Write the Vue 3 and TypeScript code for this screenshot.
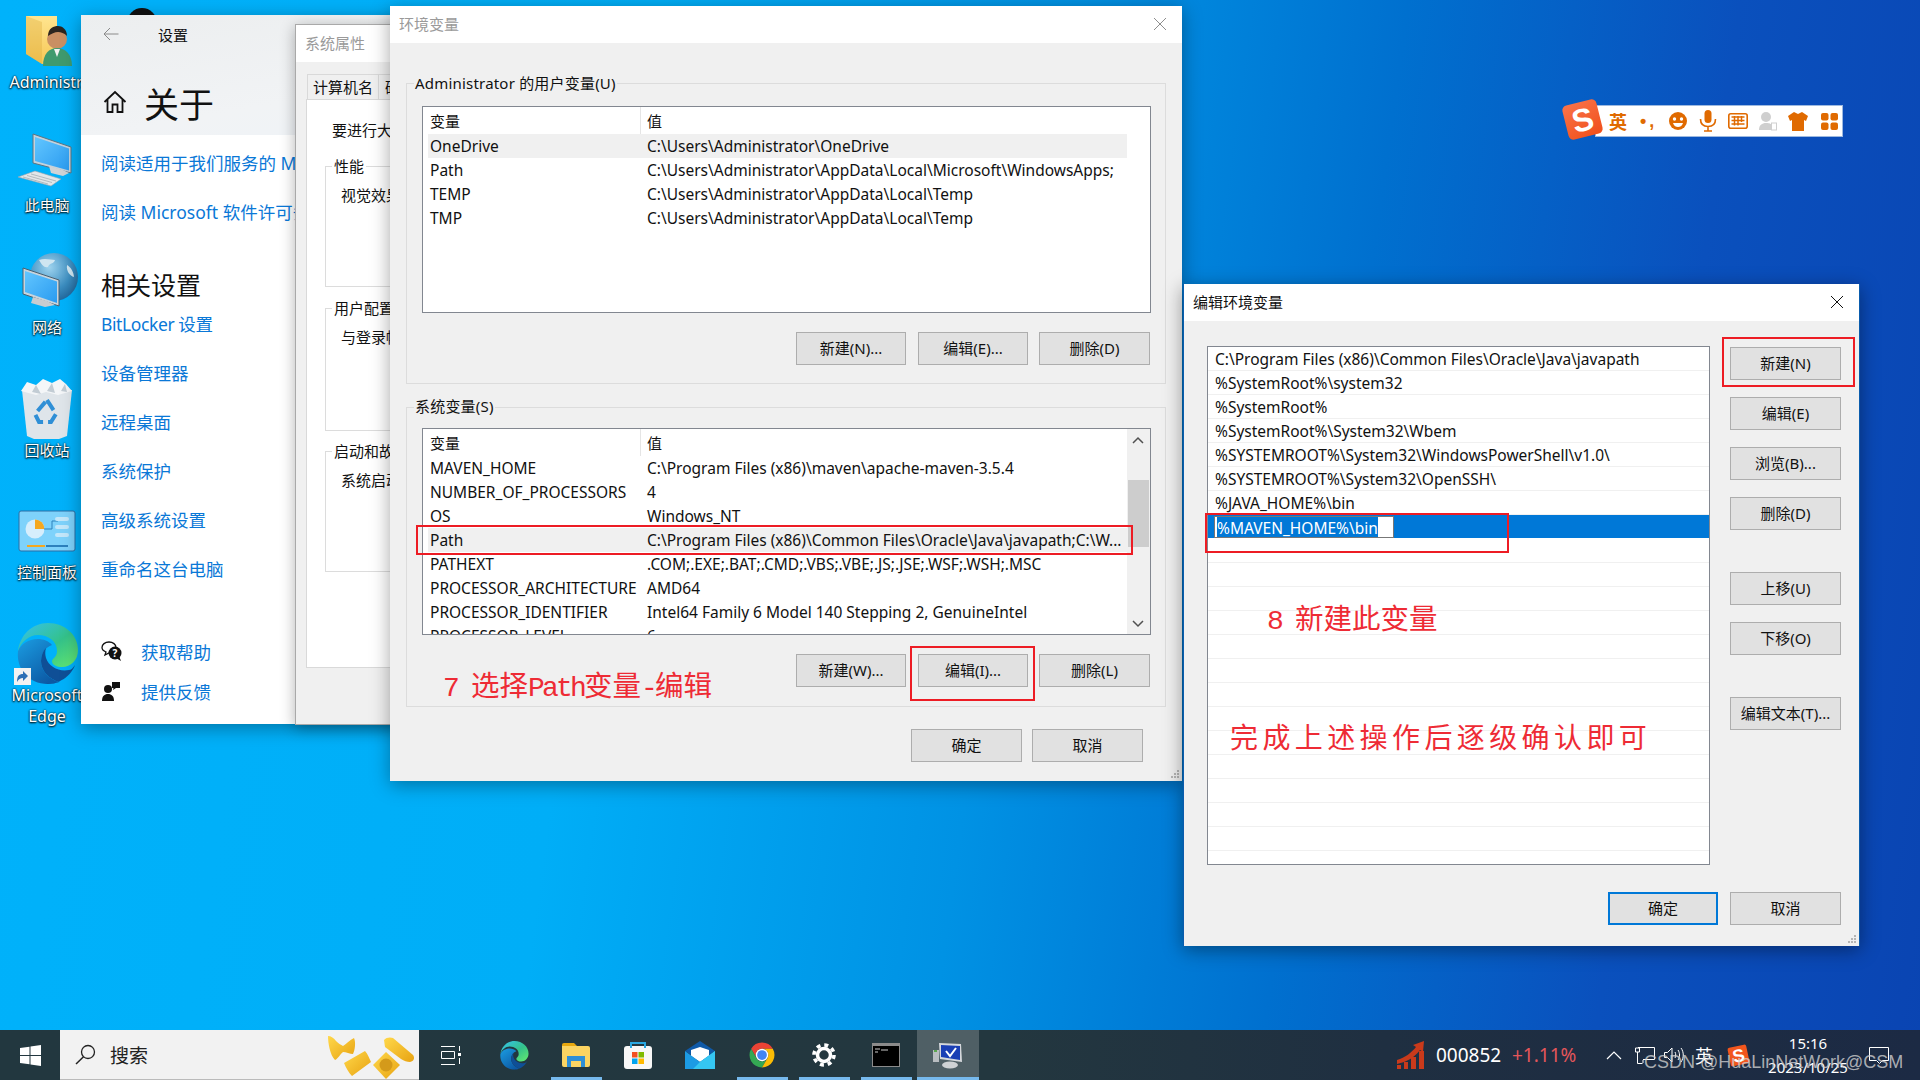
<script setup lang="ts">
interface EnvVar { name: string; value: string; selected?: boolean }

const userVars: EnvVar[] = [
  { name: 'OneDrive', value: 'C:\\Users\\Administrator\\OneDrive', selected: true },
  { name: 'Path', value: 'C:\\Users\\Administrator\\AppData\\Local\\Microsoft\\WindowsApps;' },
  { name: 'TEMP', value: 'C:\\Users\\Administrator\\AppData\\Local\\Temp' },
  { name: 'TMP', value: 'C:\\Users\\Administrator\\AppData\\Local\\Temp' },
]
const sysVars: EnvVar[] = [
  { name: 'MAVEN_HOME', value: 'C:\\Program Files (x86)\\maven\\apache-maven-3.5.4' },
  { name: 'NUMBER_OF_PROCESSORS', value: '4' },
  { name: 'OS', value: 'Windows_NT' },
  { name: 'Path', value: 'C:\\Program Files (x86)\\Common Files\\Oracle\\Java\\javapath;C:\\W...', selected: true },
  { name: 'PATHEXT', value: '.COM;.EXE;.BAT;.CMD;.VBS;.VBE;.JS;.JSE;.WSF;.WSH;.MSC' },
  { name: 'PROCESSOR_ARCHITECTURE', value: 'AMD64' },
  { name: 'PROCESSOR_IDENTIFIER', value: 'Intel64 Family 6 Model 140 Stepping 2, GenuineIntel' },
  { name: 'PROCESSOR_LEVEL', value: '6' },
]
const paths: string[] = [
  'C:\\Program Files (x86)\\Common Files\\Oracle\\Java\\javapath',
  '%SystemRoot%\\system32',
  '%SystemRoot%',
  '%SystemRoot%\\System32\\Wbem',
  '%SYSTEMROOT%\\System32\\WindowsPowerShell\\v1.0\\',
  '%SYSTEMROOT%\\System32\\OpenSSH\\',
  '%JAVA_HOME%\\bin',
]
const emptyRows: number[] = Array.from({ length: 14 }, (_, i) => i)
const groups = [
  { key: 'user', title: 'Administrator 的用户变量(U)', vars: userVars, scroll: false, btns: ['新建(N)...', '编辑(E)...', '删除(D)'] },
  { key: 'sys', title: '系统变量(S)', vars: sysVars, scroll: true, btns: ['新建(W)...', '编辑(I)...', '删除(L)'] },
]
const links1 = ['设备管理器', '远程桌面', '系统保护', '高级系统设置', '重命名这台电脑']
</script>

<template>
  <div class="desktop">
    <!-- shared gradients and shapes -->
    <svg class="defs" width="0" height="0" aria-hidden="true">
      <defs>
        <linearGradient id="edgeA" x1="0" y1="0" x2="1" y2="1"><stop offset="0" stop-color="#35c1f1" /><stop offset=".55" stop-color="#34c28a" /><stop offset="1" stop-color="#66eb6e" /></linearGradient>
        <linearGradient id="edgeB" x1="0" y1="0" x2=".7" y2="1"><stop offset="0" stop-color="#1b9de2" /><stop offset="1" stop-color="#0c59a4" /></linearGradient>
        <linearGradient id="scr" x1="0" y1="0" x2="1" y2="1"><stop offset="0" stop-color="#62c6ff" /><stop offset="1" stop-color="#2a9bf0" /></linearGradient>
        <linearGradient id="fold" x1="0" y1="0" x2="0" y2="1"><stop offset="0" stop-color="#ffe58f" /><stop offset="1" stop-color="#f6c756" /></linearGradient>
        <linearGradient id="pasta" x1="0" y1="0" x2="1" y2="1"><stop offset="0" stop-color="#ffd84a" /><stop offset="1" stop-color="#e8a312" /></linearGradient>
        <radialGradient id="globe" cx=".4" cy=".3" r=".8"><stop offset="0" stop-color="#9ed3ee" /><stop offset=".6" stop-color="#3b8dc0" /><stop offset="1" stop-color="#1c5e93" /></radialGradient>
        <symbol id="edge" viewBox="0 0 64 64">
          <path fill="url(#edgeB)" d="M3 30C1 47 13 63 33 63c4 0 8-1 11-2-10-3-18-11-18-21 0-8 5-14 11-16-3-4-9-6-14-6C13 18 6 23 3 30z" />
          <path fill="#0f4f96" d="M60 44c-3 9-14 19-27 19-1 0-2 0-3 0 4 0 9-1 14-2-10-3-18-11-18-21 0-5 2-10 5-13-1 3-1 7 0 10 3 9 13 14 23 12 2 0 4-2 6-5z" />
          <path fill="url(#edgeA)" d="M3 30C5 14 17 2 33 2c17 0 30 12 30 27 0 10-7 17-16 17-5 0-10-2-10-6 0-1 1-2 2-3 2-2 3-4 3-7 0-10-9-16-19-16C14 14 6 21 3 30z" />
        </symbol>
      </defs>
    </svg>

    <!-- desktop icons -->
    <div class="desk-icons">
      <div class="desk-item">
        <svg class="desk-svg" viewBox="0 0 64 64"><path fill="url(#fold)" d="M11 8h31v48H27l-16-10z" /><path fill="#d9a83a" d="M11 8l16 6v42l-16-10z" opacity=".35" /><circle cx="42" cy="31" r="10" fill="#c98f63" /><path fill="#2c2620" d="M33 28c0-8 6-10 10-10s9 3 9 10c-3-3-6-4-9-4s-7 2-10 4z" /><path fill="#3f9a6e" d="M28 58c0-12 6-18 14-18s15 6 15 18z" /><path fill="#f1f1f1" d="M39 41l3 8 3-8z" /></svg>
        <span class="desk-label latin">Administr.</span>
      </div>
      <div class="desk-item">
        <svg class="desk-svg" viewBox="0 0 64 64"><path fill="#c4d2dc" stroke="#5d7482" d="M18 3l38 13v26L18 32z" /><path fill="url(#scr)" d="M20 6l34 11.500v22L20 30z" /><path fill="#cfd3d6" d="M34 35l14 4 6 3-6 3-12-3z" /><path fill="#e2e6e8" stroke="#9ba5ab" stroke-width=".6" d="M3 46l17-6 26 8-10 7z" /><path stroke="#a6aeb4" stroke-width=".8" d="M8 46l25 7M12 44.500l25 7M16 43l25 7" /></svg>
        <span class="desk-label">此电脑</span>
      </div>
      <div class="desk-item">
        <svg class="desk-svg" viewBox="0 0 64 64"><circle cx="39" cy="24" r="24" fill="url(#globe)" /><path fill="#cfe6f1" d="M24 7c6-2 12 0 16 0-1 4-6 3-7 7-4 1-6-2-9-7zM52 12c4 2 7 8 7 12-4-1-8-6-7-12z" /><path fill="#c8d4dc" stroke="#4a6070" d="M8 15l36 12v26L8 41z" /><path fill="url(#scr)" d="M10 18l32 10.500v21.500L10 39z" /><path fill="#c8ccd0" d="M18 44l14 4 8 4-10 2-14-4z" /></svg>
        <span class="desk-label">网络</span>
      </div>
      <div class="desk-item">
        <svg class="desk-svg" viewBox="0 0 64 64"><path fill="#dfe5ea" d="M7 14h50l-5 46-8 3H19l-7-3z" /><path fill="#f4f6f8" d="M6 15l6-9 9 3 7-6 9 4 8-4 6 5 6 7-14 4-12-3-10 3z" /><path fill="#c2ccd4" d="M21 9l5 9-9-2zM37 7l3 10-8-2zM50 8l2 8-6-1z" /><path fill="none" stroke="#2f8fd6" stroke-width="4" stroke-dasharray="12 5" d="M32 24l9 14-5 8H24l-4-8z" /></svg>
        <span class="desk-label">回收站</span>
      </div>
      <div class="desk-item">
        <svg class="desk-svg" viewBox="0 0 64 64"><rect x="4" y="13" width="56" height="40" rx="2" fill="#7ed2fb" stroke="#2c6fa5" /><circle cx="20" cy="31" r="9.500" fill="#d6eefc" /><path fill="#f5a81f" d="M20 21.500a9.500 9.500 0 0 1 9.500 9.500H20z" /><path stroke="#2d81bd" fill="none" d="M29 31h8v-8h6" /><rect x="40" y="19" width="14" height="4" rx="2" fill="#c3e7fa" /><rect x="40" y="27" width="14" height="4" rx="2" fill="#c3e7fa" /><rect x="40" y="35" width="14" height="4" rx="2" fill="#c3e7fa" /><rect x="12" y="47" width="18" height="2" fill="#f5a81f" /><rect x="31" y="47" width="22" height="2" fill="#2d81bd" /></svg>
        <span class="desk-label">控制面板</span>
      </div>
      <div class="desk-item">
        <div class="edge-wrap">
          <svg class="desk-svg" viewBox="0 0 64 64"><use href="#edge" width="64" height="64" /></svg>
          <span class="shortcut"><svg viewBox="0 0 16 16" width="16" height="16"><path fill="#2c6fb5" d="M3 14c0-6 2-8 6-8V3l5 5-5 5v-3c-3 0-4 1-6 4z" /></svg></span>
        </div>
        <span class="desk-label latin wrap">Microsoft Edge</span>
      </div>
    </div>

    <div class="avatar-top"></div>

    <!-- settings window -->
    <section class="win settings">
      <header class="set-head">
        <div class="set-nav">
          <svg width="16" height="14" viewBox="0 0 16 14"><path d="M15.500 7H1M7 1L1 7l6 6" fill="none" stroke="#8a8a8a" stroke-width="1" /></svg>
          <span class="set-nav-title">设置</span>
        </div>
        <div class="set-title">
          <svg width="24" height="24" viewBox="0 0 24 24"><path d="M1.500 12L12 2l10.500 10M4.500 9.500V22H9.500V14.500H14.500V22H19.500V9.500" fill="none" stroke="#111" stroke-width="1.800" /></svg>
          <span>关于</span>
        </div>
      </header>
      <div class="set-body">
        <a class="link first">阅读适用于我们服务的 Microsoft 服务协议</a>
        <a class="link">阅读 Microsoft 软件许可条款</a>
        <h2 class="set-h2">相关设置</h2>
        <a class="link bit">BitLocker 设置</a>
        <a v-for="l in links1" :key="l" class="link">{{ l }}</a>
        <div class="help first-help">
          <svg width="21" height="21" viewBox="0 0 21 21"><path fill="#fff" stroke="#111" stroke-width="1.300" d="M8 1c4 0 7 2.500 7 5.500S12 12 8 12l-4 2 1-3C2.500 10 1 8.500 1 6.500 1 3.500 4 1 8 1z" /><circle cx="14" cy="12" r="6.500" fill="#111" /><path fill="#111" d="M15 17l5 3-2-5z" /><text x="14" y="15.500" class="help-q">?</text></svg>
          <a class="help-link">获取帮助</a>
        </div>
        <div class="help">
          <svg width="21" height="21" viewBox="0 0 21 21"><circle cx="7" cy="8" r="4" fill="#111" /><path fill="#111" d="M1 20c0-5 2.500-7 6-7s6 2 6 7z" /><path fill="#111" d="M11 1h8v6h-4l-3 2 .5-2H11z" /></svg>
          <a class="help-link">提供反馈</a>
        </div>
      </div>
    </section>

    <!-- system properties window -->
    <section class="win sysprop">
      <div class="sp-title">系统属性</div>
      <div class="sp-tabs"><span class="sp-tab">计算机名</span><span class="sp-tab next">硬件</span></div>
      <div class="sp-panel">
        <p class="sp-note">要进行大多数更改，你必须作为管理员登录。</p>
        <div class="sp-group g1"><span class="sp-legend">性能</span><p>视觉效果，处理器计划，内存使用，以及虚拟内存</p></div>
        <div class="sp-group g2"><span class="sp-legend">用户配置文件</span><p>与登录帐户相关的桌面设置</p></div>
        <div class="sp-group g3"><span class="sp-legend">启动和故障恢复</span><p>系统启动、系统故障和调试信息</p></div>
      </div>
    </section>

    <!-- environment variables window -->
    <section class="win env">
      <header class="titlebar inactive">
        <span>环境变量</span>
        <svg width="14" height="14" viewBox="0 0 14 14"><path d="M1 1l12 12M13 1L1 13" stroke="#8d8d8d" fill="none" /></svg>
      </header>
      <div class="env-body">
        <div v-for="g in groups" :key="g.key" class="groupbox" :class="g.key">
          <span class="legend">{{ g.title }}</span>
          <div class="listview">
            <div class="lv-main">
              <div class="lv-head"><span class="lv-h1">变量</span><span class="lv-h2">值</span></div>
              <div v-for="v in g.vars" :key="v.name" class="lv-row" :class="{ sel: v.selected }">
                <span class="lv-name">{{ v.name }}</span><span class="lv-val">{{ v.value }}</span>
              </div>
            </div>
            <div class="lv-side" :class="{ scroll: g.scroll }">
              <template v-if="g.scroll">
                <svg class="arrow" width="22" height="17" viewBox="0 0 22 17"><path d="M6 11l5-5 5 5" fill="none" stroke="#505050" stroke-width="1.500" /></svg>
                <div class="thumb"></div>
                <svg class="arrow bottom" width="22" height="17" viewBox="0 0 22 17"><path d="M6 6l5 5 5-5" fill="none" stroke="#505050" stroke-width="1.500" /></svg>
              </template>
            </div>
          </div>
          <div class="btn-row">
            <button v-for="b in g.btns" :key="b" class="btn">{{ b }}</button>
          </div>
        </div>
        <div class="foot env-foot">
          <button class="btn">确定</button>
          <button class="btn">取消</button>
        </div>
      </div>
      <svg class="grip" width="10" height="10" viewBox="0 0 10 10"><path fill="#b5b5b5" d="M7 1h2v2H7zM4 4h2v2H4zM7 4h2v2H7zM1 7h2v2H1zM4 7h2v2H4zM7 7h2v2H7z" /></svg>
      <div class="mark m-path"></div>
      <div class="mark m-edit"></div>
      <div class="note n7"><span class="mono">7&nbsp;</span>选择<span class="mono">Path</span>变量<span class="mono">-</span>编辑</div>
    </section>

    <!-- edit window -->
    <section class="win edit">
      <header class="titlebar">
        <span>编辑环境变量</span>
        <svg width="14" height="14" viewBox="0 0 14 14"><path d="M1 1l12 12M13 1L1 13" stroke="#111" fill="none" /></svg>
      </header>
      <div class="edit-body">
        <div class="edit-main">
          <div class="pathlist">
            <div v-for="p in paths" :key="p" class="p-row">{{ p }}</div>
            <div class="p-row sel"><div class="p-input"><span class="p-sel">%MAVEN_HOME%\bin</span></div></div>
            <div v-for="n in emptyRows" :key="n" class="p-row"></div>
          </div>
          <div class="side-btns">
            <button class="btn wide">新建(N)</button>
            <button class="btn wide">编辑(E)</button>
            <button class="btn wide">浏览(B)...</button>
            <button class="btn wide">删除(D)</button>
            <button class="btn wide sep">上移(U)</button>
            <button class="btn wide">下移(O)</button>
            <button class="btn wide sep">编辑文本(T)...</button>
          </div>
        </div>
        <div class="foot edit-foot">
          <button class="btn default">确定</button>
          <button class="btn wide">取消</button>
        </div>
      </div>
      <svg class="grip" width="10" height="10" viewBox="0 0 10 10"><path fill="#b5b5b5" d="M7 1h2v2H7zM4 4h2v2H4zM7 4h2v2H7zM1 7h2v2H1zM4 7h2v2H4zM7 7h2v2H7z" /></svg>
      <div class="mark m-new"></div>
      <div class="mark m-maven"></div>
      <div class="note n8"><span class="mono">8&nbsp;</span>新建此变量</div>
      <div class="note n-done">完成上述操作后逐级确认即可</div>
    </section>

    <!-- sogou bar -->
    <div class="sogou">
      <div class="sg-logo"><span>S</span></div>
      <span class="sg-en">英</span>
      <span class="sg-dot">•,</span>
      <svg width="20" height="20" viewBox="0 0 20 20"><circle cx="10" cy="10" r="9" fill="#e06a00" /><circle cx="6.500" cy="8" r="1.700" fill="#fff" /><circle cx="13.500" cy="8" r="1.700" fill="#fff" /><path d="M5 12h10c-1 3-3 4-5 4s-4-1-5-4z" fill="#fff" /></svg>
      <svg width="20" height="22" viewBox="0 0 20 22"><rect x="6.500" y="0" width="7" height="13" rx="3.500" fill="#e06a00" /><path d="M2.500 9c0 5 3 7.500 7.500 7.500s7.500-2.500 7.500-7.500M10 16.500V21M6 21h8" fill="none" stroke="#e06a00" stroke-width="1.600" /></svg>
      <svg width="20" height="16" viewBox="0 0 20 16"><rect x=".8" y=".8" width="18.400" height="14.400" rx="2" fill="#fff" stroke="#e06a00" stroke-width="1.600" /><path d="M3.500 4h13M3.500 7.500h13M3.500 11h13M6.500 3v9.500M10 3v9.500M13.500 3v6" stroke="#e06a00" stroke-width="1.500" fill="none" /></svg>
      <svg width="20" height="20" viewBox="0 0 20 20"><circle cx="8" cy="6" r="5" fill="#cfcfcf" /><path d="M1 19c0-5 3-7 7-7s5 1 6 2v5z" fill="#cfcfcf" /><rect x="13.500" y="12" width="5" height="7" fill="#fff" stroke="#cfcfcf" /></svg>
      <svg width="20" height="19" viewBox="0 0 20 19"><path fill="#e06a00" d="M6 0l4 2 4-2 6 4-2 5-2-1v11H4V8L2 9 0 4z" /></svg>
      <svg width="17" height="17" viewBox="0 0 17 17"><g fill="#e06a00"><rect width="7.500" height="7.500" rx="2" /><rect x="9.500" width="7.500" height="7.500" rx="2" /><rect y="9.500" width="7.500" height="7.500" rx="2" /><rect x="9.500" y="9.500" width="7.500" height="7.500" rx="2" /></g></svg>
    </div>

    <!-- taskbar -->
    <footer class="taskbar">
      <div class="start">
        <svg width="21" height="21" viewBox="0 0 21 21"><path fill="#fff" d="M0 3l9.500-1.300V10H0zM10.500 1.500L21 0v10h-10.500zM0 11h9.500v8.300L0 18zM10.500 11H21v10l-10.500-1.500z" /></svg>
      </div>
      <div class="search">
        <svg width="21" height="21" viewBox="0 0 21 21"><circle cx="13" cy="8" r="6.500" fill="none" stroke="#222" stroke-width="1.300" /><path d="M8.500 12.800L1 20" stroke="#222" stroke-width="1.500" /></svg>
        <span>搜索</span>
        <svg class="pasta" width="88" height="46" viewBox="0 0 88 46">
          <path fill="url(#pasta)" d="M1 3c3 0 6 2 8 5 2 2 5 4 7 5 3-2 7-6 11-8 2 4 1 12-1 16-3 0-7-2-10-2-3 2-5 7-8 8C3 22 1 10 1 3z" />
          <path fill="url(#pasta)" d="M17 30l21-12c3 3 4 7 6 11L25 43c-3-3-6-8-8-13z" />
          <path fill="url(#pasta)" d="M57 7c2-3 7-3 9-2l20 17c2 3 1 6-3 7-3 0-6-1-9-3L58 14z" />
          <path fill="url(#pasta)" d="M46 32l13-13 14 13-14 14z" />
          <circle cx="59" cy="32" r="6.500" fill="#d49a1a" />
        </svg>
      </div>
      <div class="tb-cell task">
        <svg width="20" height="19" viewBox="0 0 20 19"><path d="M0 .5h14M0 18.500h14M.5 5.500h13v7h-13zM18.500 0v5M18.500 12v6" stroke="#fff" fill="none" /><rect x="17" y="7" width="3" height="3" fill="#fff" /></svg>
      </div>
      <div class="tb-cell"><svg width="30" height="30" viewBox="0 0 64 64"><use href="#edge" width="64" height="64" /></svg></div>
      <div class="tb-cell on">
        <svg width="28" height="24" viewBox="0 0 28 24"><path fill="#e8a80f" d="M0 2a2 2 0 0 1 2-2h10l3 3H0z" /><path fill="#fbd462" d="M0 3h26a2 2 0 0 1 2 2v17a2 2 0 0 1-2 2H2a2 2 0 0 1-2-2z" /><path fill="#2f8fd6" d="M5 13h18v11h-4v-6H9v6H5z" /><rect x="9" y="18" width="10" height="6" fill="#fbd462" /></svg>
      </div>
      <div class="tb-cell">
        <svg width="30" height="30" viewBox="0 0 30 30"><rect x="1" y="6" width="28" height="23" rx="3" fill="#f7f7f7" /><path fill="none" stroke="#29a7e1" stroke-width="2" d="M8 8V3h14v5" /><rect x="9" y="12" width="5.500" height="5.500" fill="#f25022" /><rect x="15.500" y="12" width="5.500" height="5.500" fill="#7fba00" /><rect x="9" y="18.500" width="5.500" height="5.500" fill="#00a4ef" /><rect x="15.500" y="18.500" width="5.500" height="5.500" fill="#ffb900" /></svg>
      </div>
      <div class="tb-cell">
        <svg width="30" height="28" viewBox="0 0 30 28"><path fill="#0f5aa8" d="M0 10L15 0l15 10-15 10z" /><path fill="#fff" d="M6 9l9-3 9 3v6l-9 6-9-6z" /><path fill="#1c9be4" d="M0 10l15 11 15-11v18H0z" /><path fill="#35c6f2" d="M30 10L15 21 8 28h22z" /></svg>
      </div>
      <div class="tb-cell on">
        <svg width="30" height="30" viewBox="0 0 48 48"><path fill="#ea4335" d="M24 4A20 20 0 0 1 41.300 14H24a10 10 0 0 0-8.700 15L6.700 14A20 20 0 0 1 24 4z" /><path fill="#34a853" d="M6.700 14L15.300 29A10 10 0 0 0 32.700 29L24 44A20 20 0 0 1 6.700 14z" /><path fill="#fbbc05" d="M41.300 14H24a10 10 0 0 1 8.700 15L24 44a20 20 0 0 0 17.300-30z" /><circle cx="24" cy="24" r="10" fill="#fff" /><circle cx="24" cy="24" r="7.800" fill="#4285f4" /></svg>
      </div>
      <div class="tb-cell on">
        <svg width="24" height="24" viewBox="0 0 24 24"><circle cx="12" cy="12" r="6.500" fill="none" stroke="#fff" stroke-width="3.500" /><circle cx="12" cy="12" r="10" fill="none" stroke="#fff" stroke-width="3.600" stroke-dasharray="4 3.850" /></svg>
      </div>
      <div class="tb-cell on">
        <svg width="28" height="24" viewBox="0 0 28 24"><rect width="28" height="24" fill="#8b8b8b" /><rect x="1" y="3" width="26" height="20" fill="#000" /><path d="M3 6h5M3 9h3M9 7h7" stroke="#ccc" /></svg>
      </div>
      <div class="tb-cell on active">
        <svg width="30" height="28" viewBox="0 0 30 28"><path fill="#d5d8dc" d="M6 2l22 1 1 18-22-3z" /><path fill="#1a3fb5" d="M8 4l19 1v14L8 16z" /><path d="M13 10l4 5 6-8" stroke="#fff" stroke-width="2" fill="none" /><ellipse cx="17" cy="24" rx="8" ry="3.500" fill="#cfd2d5" /><rect x="0" y="9" width="6" height="12" fill="#b9bdc1" /><rect x="1" y="9" width="3" height="2" fill="#5aa64f" /></svg>
      </div>
      <div class="tray">
        <svg class="t-chart" width="28" height="28" viewBox="0 0 28 28"><g fill="#c93a1b"><rect x="0" y="24" width="4" height="4" /><rect x="7" y="21" width="4" height="7" /><rect x="14" y="16" width="5" height="12" /><rect x="22" y="10" width="5" height="18" /><path d="M0 19C8 17 15 11 19 6l-3-2 11-4-1 11-3-2c-5 7-13 12-23 14z" /></g></svg>
        <span class="t-code">000852</span>
        <span class="t-pct">+1.11%</span>
        <svg class="t-chev" width="16" height="9" viewBox="0 0 16 9"><path d="M1 8l7-7 7 7" fill="none" stroke="#fff" stroke-width="1.200" /></svg>
        <svg class="t-net" width="20" height="17" viewBox="0 0 20 17"><path d="M3 .5h16.500v12H8M.5 1h4v4h-4zM2.500 5v11.500M2.500 16.500h5M8 13v3" fill="none" stroke="#fff" /></svg>
        <svg class="t-spk" width="20" height="16" viewBox="0 0 20 16"><path d="M.5 5.500h3L8 1v14l-4.500-4.500h-3zM11 5c1 2 1 4 0 6M14 3c2 3 2 7 0 10M17 1c3 4 3 10 0 14" fill="none" stroke="#fff" /></svg>
        <span class="t-ime">英</span>
        <div class="t-sg"><span>S</span></div>
        <div class="t-clock"><span>15:16</span><span>2023/10/25</span></div>
        <svg class="t-notif" width="20" height="17" viewBox="0 0 20 17"><path d="M.5.5h19v13h-6l-3 3-3-3h-7z" fill="none" stroke="#fff" /></svg>
      </div>
    </footer>
    <div class="watermark">CSDN @HuaLinNetWork@CSM</div>
  </div>
</template>

<style>
html, body { margin: 0; padding: 0; overflow: hidden; }
</style>

<style scoped>
.desktop {
  position: relative;
  width: 1920px;
  height: 1080px;
  overflow: hidden;
  font-family: "Noto Sans", "Noto Sans CJK SC", sans-serif;
  font-size: 15px;
  color: #111;
  background: linear-gradient(98deg, #00b2fb 0%, #00aef7 32%, #0092e4 52%, #0070cf 68%, #0a50bd 84%, #0a44b2 100%);
}
.defs { position: absolute; }
p, h2 { margin: 0; font-weight: 400; }
a { color: #0a78d7; }

/* desktop icons */
.desk-icons { position: absolute; left: 0; top: 8px; width: 94px; display: flex; flex-direction: column; }
.desk-item { height: 122.6px; display: flex; flex-direction: column; align-items: center; }
.desk-svg { width: 64px; height: 64px; display: block; }
.desk-label { color: #fff; font-size: 15px; line-height: 20px; text-align: center; text-shadow: 0 1px 2px #000, 0 0 2px #000; white-space: nowrap; }
.desk-label.latin { font-size: 16px; }
.desk-label.wrap { white-space: normal; width: 80px; line-height: 21px; }
.edge-wrap { position: relative; }
.shortcut { position: absolute; left: -1px; bottom: 0; width: 17px; height: 17px; background: #f2f2f2; display: flex; }
.avatar-top { position: absolute; left: 127px; top: 8px; width: 30px; height: 30px; border-radius: 50%; background: #111; }

/* windows */
.win { position: absolute; box-sizing: border-box; }
.settings { left: 81px; top: 15px; width: 320px; height: 709px; background: #fff; box-shadow: 0 4px 18px rgba(0,0,0,.35); }
.set-head { height: 120px; box-sizing: border-box; background: linear-gradient(170deg, #eceeef, #f1f3f5 70%, #eff3f7); padding: 9px 0 0 22px; }
.set-nav { display: flex; align-items: center; height: 20px; }
.set-nav-title { margin-left: 39px; font-size: 15px; }
.set-title { display: flex; align-items: center; margin-top: 35px; height: 46px; font-size: 35px; }
.set-title span { margin-left: 17px; }
.set-body { display: flex; flex-direction: column; padding: 16px 0 0 20px; white-space: nowrap; }
.link { font-size: 17.5px; line-height: 24px; margin-bottom: 25px; }
.link.bit { margin-bottom: 25px; letter-spacing: -.4px; }
.set-h2 { font-size: 25px; line-height: 34px; margin-top: 18.5px; margin-bottom: 10.5px; }
.help { display: flex; align-items: center; height: 24px; margin-bottom: 16px; }
.first-help { margin-top: 33px; }
.help-link { color: #0a78d7; font-size: 17.5px; margin-left: 19px; }
.help-q { fill: #fff; font-size: 10px; font-weight: 700; text-anchor: middle; }

.sysprop { left: 295px; top: 24px; width: 110px; height: 701px; background: #f0f0f0; border: 1px solid #a9a9a9; box-shadow: 0 3px 14px rgba(0,0,0,.3); overflow: hidden; }
.sp-title { height: 37px; background: #fff; color: #9a9a9a; padding-left: 9px; line-height: 36px; white-space: nowrap; }
.sp-tabs { display: flex; margin: 12px 0 0 11px; height: 25px; white-space: nowrap; }
.sp-tab { width: 70px; border: 1px solid #d9d9d9; border-bottom: 0; text-align: center; line-height: 24px; background: #f0f0f0; flex: none; }
.sp-tab.next { margin-left: -1px; padding-left: 6px; text-align: left; }
.sp-panel { margin-left: 10px; width: 200px; height: 569px; background: #fff; border: 1px solid #d9d9d9; box-sizing: border-box; padding: 20px 0 0 25px; white-space: nowrap; }
.sp-note { line-height: 21px; }
.sp-group { position: relative; margin-left: -7px; border: 1px solid #dcdcdc; box-sizing: border-box; width: 220px; padding: 18px 0 0 15px; }
.sp-group p { line-height: 21px; }
.sp-legend { position: absolute; left: 6px; top: -11px; background: #fff; padding: 0 2px; line-height: 21px; }
.g1 { height: 121px; margin-top: 25px; }
.g2 { height: 123px; margin-top: 21px; }
.g3 { height: 121px; margin-top: 20px; }

.titlebar { height: 37px; box-sizing: border-box; background: #fff; display: flex; align-items: center; justify-content: space-between; padding: 0 15px 2px 9px; }
.titlebar.inactive { color: #9a9a9a; }

.env { left: 390px; top: 6px; width: 792px; height: 775px; background: #f0f0f0; box-shadow: 0 4px 18px rgba(0,0,0,.35); }
.env-body { padding: 40px 16px 0; display: flex; flex-direction: column; }
.groupbox { position: relative; box-sizing: border-box; height: 301px; border: 1px solid #dcdcdc; padding: 22px 14px 0 15px; }
.groupbox + .groupbox { margin-top: 23px; height: 300px; padding-top: 20px; }
.legend { position: absolute; left: 7px; top: -12px; background: #f0f0f0; line-height: 22px; padding: 0 1px; white-space: nowrap; letter-spacing: .2px; }
.groupbox + .groupbox .legend { top: -13px; }
.listview { height: 207px; box-sizing: border-box; border: 1px solid #828790; background: #fff; display: flex; overflow: hidden; }
.lv-main { flex: 1; padding-left: 5px; overflow: hidden; white-space: nowrap; }
.lv-side { width: 23px; flex: none; position: relative; }
.lv-head { height: 27px; display: flex; line-height: 28px; }
.lv-h1 { width: 210px; padding-left: 2px; box-sizing: content-box; }
.lv-h2 { border-left: 1px solid #e5e5e5; padding-left: 6px; flex: 1; }
.lv-row { height: 24px; line-height: 24px; display: flex; padding-left: 2px; font-size: 15.5px; }
.lv-row.sel { background: #f0f0f0; }
.lv-name { width: 217px; flex: none; white-space: nowrap; }
.lv-val { white-space: nowrap; }
.lv-side.scroll { background: #f0f0f0; display: flex; flex-direction: column; }
.arrow { display: block; flex: none; margin-top: 3px; }
.arrow.bottom { margin-top: auto; margin-bottom: 2px; }
.thumb { margin: 31px 1px 0; height: 67px; background: #cdcdcd; }

.btn-row { display: flex; justify-content: flex-end; gap: 11px; margin-top: 19px; padding-right: 1px; }
.btn { box-sizing: border-box; width: 110px; height: 33px; background: #e1e1e1; border: 1px solid #adadad; border-radius: 0; font: inherit; color: #111; padding: 0 0 2px; flex: none; }
.btn-row .btn:nth-child(2) { margin-left: 1px; }
.btn-row .btn:last-child { width: 111px; }
.foot { display: flex; justify-content: flex-end; gap: 10px; }
.env-foot { margin-top: 22px; padding-right: 23px; }
.env-foot .btn { width: 111px; }
.grip { position: absolute; right: 2px; bottom: 2px; }

.edit { left: 1183px; top: 284px; width: 677px; height: 662px; background: #f0f0f0; border-left: 1px solid #0a5cad; border-right: 1px solid #0a5cad; box-shadow: 0 4px 18px rgba(0,0,0,.4); }
.edit-body { padding: 25px 18px 0 23px; display: flex; flex-direction: column; }
.edit-main { display: flex; gap: 20px; }
.pathlist { width: 503px; height: 519px; box-sizing: border-box; border: 1px solid #828790; background: #fff; overflow: hidden; flex: none; }
.p-row { height: 24px; box-sizing: border-box; border-bottom: 1px solid #f0f0f0; line-height: 25px; padding-left: 7px; font-size: 15.5px; }
.p-row.sel { background: #0078d7; border-bottom: 1px solid #fff; padding-left: 6px; padding-top: 1px; }
.p-input { width: 180px; height: 22px; box-sizing: border-box; background: #fff; border: 1px solid #777; padding-left: 2px; line-height: 19px; }
.p-sel { display: inline-block; height: 20px; line-height: 22px; background: #0078d7; color: #fff; }
.side-btns { display: flex; flex-direction: column; gap: 17px; margin-top: 1px; }
.btn.wide { width: 111px; }
.btn.sep { margin-top: 25px; }
.edit-foot { margin-top: 27px; gap: 12px; }
.btn.default { border: 2px solid #0078d7; }

.mark { position: absolute; box-sizing: border-box; border: 2px solid #ed1c24; pointer-events: none; }
.m-path { left: 26px; top: 519px; width: 717px; height: 30px; }
.m-edit { left: 520px; top: 640px; width: 125px; height: 55px; }
.m-new { left: 538px; top: 53px; width: 133px; height: 50px; }
.m-maven { left: 21px; top: 229px; width: 304px; height: 40px; }
.note { position: absolute; color: #ee2b35; font-size: 28.5px; line-height: 36px; white-space: nowrap; font-family: "Noto Sans CJK SC", sans-serif; }
.mono { font-family: "Liberation Mono", monospace; font-size: 28px; letter-spacing: -2.8px; }
.n7 { left: 53px; top: 660px; }
.n8 { left: 83px; top: 315px; }
.n-done { left: 46px; top: 434px; font-size: 28px; letter-spacing: 4.4px; }

/* sogou */
.sogou { position: absolute; left: 1595px; top: 105px; width: 248px; height: 32px; box-sizing: border-box; background: #fff; border: 1px solid #9db9e0; display: flex; align-items: center; }
.sogou > * { flex: none; }
.sg-logo { position: absolute; left: -31px; top: -4px; width: 35px; height: 35px; border-radius: 5px; background: linear-gradient(160deg, #f9734a, #f0501a); transform: rotate(-14deg); display: flex; align-items: center; justify-content: center; color: #fff; font: 800 32px/1 "Liberation Sans", sans-serif; }
.sg-en { margin-left: 13px; color: #e06a00; font-size: 18px; font-weight: 700; width: 20px; }
.sg-dot { margin-left: 11px; color: #e06a00; font: 700 18px/1 "Liberation Sans", sans-serif; width: 18px; letter-spacing: 3px; }
.sogou > svg { margin-left: 10px; }
.sogou > svg:last-child { margin-left: 13px; }

/* taskbar */
.taskbar { position: absolute; left: 0; right: 0; bottom: 0; height: 50px; background: linear-gradient(90deg, #22373f, #23373f 52%, #1f2f41 72%, #1c2a44); display: flex; align-items: stretch; color: #fff; }
.start { width: 60px; display: flex; align-items: center; justify-content: center; flex: none; }
.search { width: 359px; flex: none; box-sizing: border-box; background: #f2f2f2; border-bottom: 1px solid #bbb; color: #222; display: flex; align-items: center; padding-left: 15px; font-size: 19px; position: relative; }
.search span { margin-left: 14px; }
.pasta { margin-left: auto; margin-right: 4px; margin-top: 2px; }
.tb-cell { width: 62px; flex: none; display: flex; align-items: center; justify-content: center; position: relative; }
.tb-cell.task { margin-left: 0; width: 64px; }
.tb-cell.on::after { content: ""; position: absolute; left: 6px; right: 5px; bottom: 0; height: 3px; background: #76b9ed; }
.tb-cell.active { background: rgba(255,255,255,.2); }
.tb-cell.active::after { left: 0; right: 0; }
.tray { margin-left: auto; display: flex; align-items: center; padding-right: 31px; }
.tray > * { flex: none; }
.t-code { margin-left: 11px; font: 400 19px "Noto Sans", sans-serif; width: 63px; }
.t-pct { margin-left: 13px; font: 400 19px "Noto Sans", sans-serif; color: #e4565a; width: 64px; }
.t-chev { margin-left: 30px; }
.t-net { margin-left: 13px; }
.t-spk { margin-left: 9px; }
.t-ime { margin-left: 11px; font-size: 18px; width: 18px; }
.t-sg { margin-left: 16px; width: 19px; height: 19px; border-radius: 2px; background: #f2561d; transform: rotate(-12deg); display: flex; align-items: center; justify-content: center; font: 800 18px/1 "Liberation Sans", sans-serif; color: #fff; }
.t-clock { margin-left: 18px; width: 84px; display: flex; flex-direction: column; align-items: center; font: 400 15px/24px "Noto Sans", sans-serif; white-space: nowrap; }
.t-notif { margin-left: 19px; }
.watermark { position: absolute; left: 1644px; top: 1049px; font: 400 18px/26px "Liberation Sans", sans-serif; color: rgba(208,208,208,.8); white-space: nowrap; }
</style>
